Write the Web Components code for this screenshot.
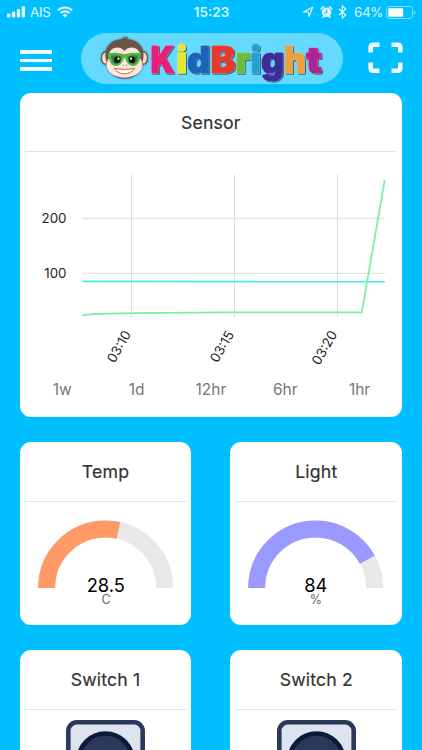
<!DOCTYPE html>
<html lang="en">
<head>
<meta charset="utf-8">
<meta name="viewport" content="width=device-width, initial-scale=1">
<title>KidBright</title>
<style>
    html, body {
        margin: 0;
        height: 100%;
        overflow: hidden;
    }

    body {
        background: #00bfff;
        color: #333;
        font-family: Inter, "Liberation Sans", sans-serif;
    }
</style>
</head>
<body>
<kb-app></kb-app>

<script>
const makeTemplate = (html) => {
    const template = document.createElement('template');
    template.innerHTML = html;
    return template;
};

class BaseElement extends HTMLElement {
    constructor() {
        super();
        this.attachShadow({ mode: 'open' });
        this.shadowRoot.appendChild(this.constructor.template.content.cloneNode(true));
    }
}

/* STATUS BAR */
class StatusBar extends BaseElement {
    static template = makeTemplate(`
        <style>
            :host {
                display: grid;
                grid-template-columns: 1fr auto 1fr;
                align-items: center;
                height: 24px;
                padding: 0 6px 0 7px;
                color: #dcf6ff;
                font-size: 13.5px;
            }

            div {
                display: flex;
                align-items: center;
            }

            svg {
                display: block;
                fill: currentColor;
            }

            .right {
                justify-content: flex-end;
            }

            .carrier {
                margin: 0 7px 0 5px;
                width: 20px;
                font-size: 13.5px;
                letter-spacing: -.4px;
            }

            .time {
                font-size: 13.5px;
                font-weight: 600;
            }

            .percent {
                margin: 0 4px 0 7px;
                width: 28px;
                letter-spacing: -.4px;
            }
        </style>
        <div>
            <svg width="18" height="12" viewBox="0 0 18 12">
                <rect x="0" y="7.5" width="3.4" height="4" rx="1"/>
                <rect x="4.9" y="5.5" width="3.4" height="6" rx="1"/>
                <rect x="9.8" y="3" width="3.4" height="8.5" rx="1"/>
                <rect x="14.7" y="0" width="3.4" height="11.5" rx="1"/>
            </svg>
            <span class="carrier">AIS</span>
            <svg width="16" height="12" viewBox="0 0 16 12">
                <g fill="none" stroke="currentColor" stroke-width="2.2">
                    <path d="M.9 4.4a10.2 10.2 0 0 1 14.2 0"/>
                    <path d="M3.6 7.2a6.4 6.4 0 0 1 8.8 0"/>
                </g>
                <path d="M8 11.5 5.6 9a3.6 3.6 0 0 1 4.8 0z"/>
            </svg>
        </div>
        <span class="time">15:23</span>
        <div class="right">
            <svg width="12" height="12" viewBox="0 0 12 12">
                <path d="M1.4 6 10.6 1.3 7 10.6 6.4 6z" fill="none" stroke="currentColor" stroke-width="1.2" stroke-linejoin="round"/>
            </svg>
            <svg width="13" height="12" viewBox="0 0 13 12" style="margin-left:6px">
                <circle cx="6.5" cy="6.3" r="4.8"/>
                <path d="M1.2 2.9 3.5.9M11.8 2.9 9.5.9M2.9 11.4l1.2-1.5M10.1 11.4 8.9 9.9" stroke="currentColor" stroke-width="1.6" stroke-linecap="round"/>
                <path d="M6.7 3.4v3.2L4.4 7" fill="none" stroke="#00bfff" stroke-width="1.1"/>
            </svg>
            <svg width="9" height="14" viewBox="0 0 9 14" style="margin-left:5px">
                <path d="M1 4l6.8 6-3.5 3V1l3.5 3L1 10" fill="none" stroke="currentColor" stroke-width="1.2"/>
            </svg>
            <span class="percent">64%</span>
            <svg width="30" height="13" viewBox="0 0 30 13">
                <rect x=".5" y=".5" width="26" height="12" rx="2.6" fill="none" stroke="#7adfff"/>
                <rect x="2.2" y="2.3" width="15" height="8.4" rx=".8" fill="#fff"/>
                <path d="M27.9 4.4q1.5.6 1.5 2.1t-1.5 2.1z" fill="#7adfff"/>
            </svg>
        </div>
    `);
}

/* LOGO */
class KidLogo extends BaseElement {
    static template = makeTemplate(`
        <style>
            :host {
                display: block;
                width: 262px;
                height: 51px;
                border-radius: 26px;
                background: #66d9ff;
            }

            svg {
                display: block;
            }

            /* thickened glyphs, thin light rim, dark offset shadow */
            text {
                font: 900 36.5px Inter, "Liberation Sans", sans-serif;
                stroke-width: 1.2px;
                stroke-linejoin: round;
                filter: drop-shadow(0 0 .5px #e4f5fa) drop-shadow(1.6px 1.6px .6px #24506bcc);
            }
        </style>
        <svg width="262" height="51" viewBox="81 33 262 51">
            <g style="filter: drop-shadow(0 0 1px #426274)">
                <ellipse cx="105.5" cy="58" rx="3.9" ry="6.2" fill="#f6dfcd" stroke="#6b5548" stroke-width="1.2"/>
                <ellipse cx="143.5" cy="58" rx="3.9" ry="6.2" fill="#f6dfcd" stroke="#6b5548" stroke-width="1.2"/>
                <path d="M106 60C103 47 112 39.5 121.5 39.2L124 37.5 128 37.3 127 39.2C138 39.5 146 48 143 60 142 73 134 78.5 124.5 78.5S107 73 106 60z" fill="#6b5548"/>
                <path d="M109 58C107 48 119 44 124.5 51 130 44 142 48 140 58 147 68 138 77.5 124.5 77.5S102 68 109 58z" fill="#fae7d8"/>
            </g>
            <path d="M107.5 53.5Q116 51.5 124.5 54.3 133 51.5 141.5 53.5L140.3 57Q139 66 133 66 127.5 66 125.5 59L124.5 57.5 123.5 59Q121.5 66 116 66 110 66 108.7 57z" fill="#4db848"/>
            <path d="M111 55.5Q116 54.5 121.5 56.5 120 64 116 64.2 111.5 64 111 55.5zM138 55.5Q133 54.5 127.5 56.5 129 64 133 64.2 137.5 64 138 55.5z" fill="#2c8432"/>
            <circle cx="117.3" cy="59.8" r="3.3" fill="#151515"/>
            <circle cx="132" cy="59.8" r="3.3" fill="#151515"/>
            <circle cx="118.4" cy="58.7" r="1.1" fill="#fff"/>
            <circle cx="131" cy="58.7" r="1.1" fill="#fff"/>
            <path d="M122.7 65l1 .5M127 65l-1 .5" stroke="#8d6250" stroke-width="1"/>
            <path d="M114.5 68.5Q124.5 70.5 134.5 68.5 131 73.8 124.5 73.8T114.5 68.5z" fill="#fff" stroke="#d9604b" stroke-width="1"/>
            <text x="150.5" y="73" textLength="24" lengthAdjust="spacingAndGlyphs" fill="#e91e79" stroke="#e91e79">K</text>
            <text x="176.5" y="73" textLength="10.5" lengthAdjust="spacingAndGlyphs" fill="#e6e62c" stroke="#e6e62c">i</text>
            <text x="187" y="73" textLength="23" lengthAdjust="spacingAndGlyphs" fill="#1d63b8" stroke="#1d63b8">d</text>
            <text x="210.5" y="73" textLength="25" lengthAdjust="spacingAndGlyphs" fill="#e63a2e" stroke="#e63a2e">B</text>
            <text x="235.5" y="73" textLength="15" lengthAdjust="spacingAndGlyphs" fill="#6dbb3c" stroke="#6dbb3c">r</text>
            <text x="250.5" y="73" textLength="10.5" lengthAdjust="spacingAndGlyphs" fill="#239fd0" stroke="#239fd0">i</text>
            <text x="261" y="73" textLength="23" lengthAdjust="spacingAndGlyphs" fill="#3f2c9c" stroke="#3f2c9c">g</text>
            <text x="284" y="73" textLength="22" lengthAdjust="spacingAndGlyphs" fill="#eda03c" stroke="#eda03c">h</text>
            <text x="306" y="73" textLength="16" lengthAdjust="spacingAndGlyphs" fill="#ac2590" stroke="#ac2590">t</text>
        </svg>
    `);
}

/* HEADER */
class AppHeader extends BaseElement {
    static template = makeTemplate(`
        <style>
            :host {
                display: flex;
                align-items: center;
                height: 68.5px;
                padding: 0 19px 0 20px;
                box-sizing: border-box;
            }

            .hamburger {
                display: flex;
                flex-direction: column;
                gap: 5px;
                width: 32px;
                margin: 4px 29px 0 0;
            }

            .line {
                height: 3.5px;
                background: #f2fcff;
            }

            .scan {
                display: block;
                margin-left: 25px;
            }
        </style>
        <div class="hamburger">
            <div class="line"></div>
            <div class="line"></div>
            <div class="line"></div>
        </div>
        <kid-logo></kid-logo>
        <svg class="scan" width="35" height="32" viewBox="0 0 35 32">
            <path d="M2.7 10.5V5.2q0-2.5 2.5-2.5H11.5M23.5 2.7h6.3q2.5 0 2.5 2.5v5.3M32.3 20.5v5.8q0 2.5-2.5 2.5H23.5M11.5 28.8H5.2q-2.5 0-2.5-2.5V20.5" fill="none" stroke="#f2fcff" stroke-width="4.6"/>
        </svg>
    `);
}

/* CARD */
class DashCard extends BaseElement {
    static template = makeTemplate(`
        <style>
            :host {
                display: flex;
                flex-direction: column;
                box-sizing: border-box;
                border-radius: 11px;
                background: #fff;
            }

            h2 {
                margin: 0 5.5px;
                height: 58.5px;
                line-height: 59px;
                border-bottom: 1px solid #e2e2e2;
                text-align: center;
                font-size: 17.7px;
                font-weight: 400;
                letter-spacing: .15px;
                -webkit-text-stroke: .2px currentColor;
            }
        </style>
        <h2></h2>
        <slot></slot>
    `);

    connectedCallback() {
        this.shadowRoot.querySelector('h2').textContent = this.getAttribute('title-text');
    }
}

/* CHART */
class SensorChart extends BaseElement {
    static template = makeTemplate(`
        <style>
            :host {
                display: block;
            }

            svg {
                display: block;
            }

            text {
                font-size: 13.3px;
                fill: #222;
            }

            .grid {
                stroke: #dcdcdc;
            }

            .series {
                fill: none;
                stroke-width: 1.8;
            }
        </style>
        <svg width="382.5" height="220" viewBox="20 152 382.5 220">
            <path class="grid" d="M131.5 174.5V317M234.5 174.5V317M337.5 174.5V317M82 218.3H385M82 273.3H385"/>
            <path class="series" stroke="#45ecf0" d="M82.3 281.4L385 281.7"/>
            <path class="series" stroke="#7bf0a0" d="M82.3 315.3Q92 314 108 313.7 160 312.6 230 312.4H361.8L384.7 180"/>
            <text x="66.5" y="222.8" text-anchor="end">200</text>
            <text x="66.5" y="277.8" text-anchor="end">100</text>
            <g text-anchor="middle">
                <text transform="translate(118.8 346.5) rotate(-60)" y="4.8">03:10</text>
                <text transform="translate(221.8 346.5) rotate(-60)" y="4.8">03:15</text>
                <text transform="translate(324.3 347.5) rotate(-60)" y="4.8">03:20</text>
            </g>
        </svg>
    `);
}

class RangePicker extends BaseElement {
    static template = makeTemplate(`
        <style>
            :host {
                display: grid;
                grid-template-columns: repeat(5, 1fr);
                padding: 0 5.5px;
                margin-top: 8px;
                line-height: 20px;
                text-align: center;
                font-size: 15.5px;
                color: #777;
            }
        </style>
        <span>1w</span>
        <span>1d</span>
        <span>12hr</span>
        <span>6hr</span>
        <span>1hr</span>
    `);
}

/* GAUGE */
class ArcGauge extends BaseElement {
    static template = makeTemplate(`
        <style>
            :host {
                display: block;
            }

            svg {
                display: block;
            }

            path {
                fill: none;
                stroke-width: 17;
            }

            text {
                text-anchor: middle;
            }

            .value {
                font-size: 18.3px;
                fill: #000;
            }

            .unit {
                font-size: 12.5px;
                fill: #666;
            }
        </style>
        <svg width="172" height="110" viewBox="-85.6 -86 172 110">
            <path d="M-59 0A59 59 0 0 1 59 0" stroke="#e8e8e8"/>
            <path class="arc" d="M-59 0A59 59 0 0 1 59 0" pathLength="100"/>
            <text class="value" x=".2" y="4"></text>
            <text class="unit" x=".4" y="16.2"></text>
        </svg>
    `);

    connectedCallback() {
        const root = this.shadowRoot;
        const arc = root.querySelector('.arc');
        arc.setAttribute('stroke', this.getAttribute('color'));
        arc.setAttribute('stroke-dasharray', this.getAttribute('fill') + ' 200');
        root.querySelector('.value').textContent = this.getAttribute('value');
        root.querySelector('.unit').textContent = this.getAttribute('unit');
    }
}

/* SWITCH */
class PushSwitch extends BaseElement {
    static template = makeTemplate(`
        <style>
            :host {
                display: flex;
                justify-content: center;
                padding-top: 10.5px;
            }
        </style>
        <svg width="79" height="79" viewBox="0 0 79 79">
            <rect x="2.3" y="2.3" width="74.4" height="74.4" rx="8.5" fill="#dfe3ef" stroke="#2c3859" stroke-width="4.6"/>
            <circle cx="39.5" cy="40.5" r="27" fill="#2c3857" stroke="#0b1a3b" stroke-width="4.5"/>
        </svg>
    `);
}

/* PAGE */
class KbApp extends BaseElement {
    static template = makeTemplate(`
        <style>
            :host {
                display: block;
                height: 100vh;
                overflow: hidden;
            }

            main {
                display: grid;
                grid-template-columns: 171.9px 171.9px;
                column-gap: 38.9px;
                row-gap: 25px;
                padding: 0 0 0 19.55px;
            }

            .wide {
                grid-column: 1 / 3;
                height: 324.5px;
            }

            .gauge, .switch {
                height: 183px;
            }
        </style>
        <status-bar></status-bar>
        <app-header></app-header>
        <main>
            <dash-card class="wide" title-text="Sensor">
                <sensor-chart></sensor-chart>
                <range-picker></range-picker>
            </dash-card>
            <dash-card class="gauge" title-text="Temp">
                <arc-gauge value="28.5" unit="C" fill="57" color="#ff9966"></arc-gauge>
            </dash-card>
            <dash-card class="gauge" title-text="Light">
                <arc-gauge value="84" unit="%" fill="84" color="#9999ff"></arc-gauge>
            </dash-card>
            <dash-card class="switch" title-text="Switch 1">
                <push-switch></push-switch>
            </dash-card>
            <dash-card class="switch" title-text="Switch 2">
                <push-switch></push-switch>
            </dash-card>
        </main>
    `);
}

window.customElements.define('status-bar', StatusBar);
window.customElements.define('kid-logo', KidLogo);
window.customElements.define('app-header', AppHeader);
window.customElements.define('dash-card', DashCard);
window.customElements.define('sensor-chart', SensorChart);
window.customElements.define('range-picker', RangePicker);
window.customElements.define('arc-gauge', ArcGauge);
window.customElements.define('push-switch', PushSwitch);
window.customElements.define('kb-app', KbApp);
</script>
</body>
</html>
